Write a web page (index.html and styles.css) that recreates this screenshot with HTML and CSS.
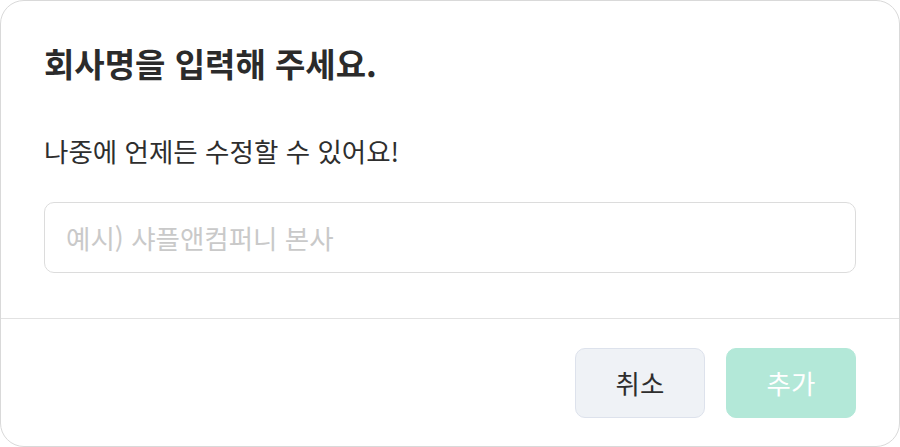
FILE: index.html
```html
<!DOCTYPE html>
<html lang="ko">
<head>
<meta charset="utf-8">
<link rel="stylesheet" href="styles.css">
</head>
<body>
<div class="dialog">
  <div class="dialog-body">
    <h1 class="title">회사명을 입력해 주세요.</h1>
    <p class="subtitle">나중에 언제든 수정할 수 있어요!</p>
    <input class="field" type="text" placeholder="예시) 샤플앤컴퍼니 본사">
  </div>
  <div class="dialog-footer">
    <button class="btn btn-cancel" type="button">취소</button>
    <button class="btn btn-add" type="button">추가</button>
  </div>
</div>
</body>
</html>
```
FILE: styles.css
```css
* { box-sizing: border-box; }
html, body { margin: 0; padding: 0; background: #ffffff; }
body {
  width: 900px;
  height: 447px;
  font-family: "Noto Sans CJK KR", "Noto Sans", sans-serif;
  color: #2e2e2e;
}
.dialog {
  width: 900px;
  height: 447px;
  border: 1px solid #d9d9d9;
  border-radius: 24px;
  background: #fff;
  display: flex;
  flex-direction: column;
  overflow: hidden;
}
.dialog-body {
  padding: 42px 43px 45px 43px;
  display: flex;
  flex-direction: column;
  border-bottom: 1px solid #e2e2e2;
}
.title {
  margin: 0;
  font-size: 33px;
  font-weight: 700;
  line-height: 40px;
  color: #2b2b2b;
}
.subtitle {
  margin: 52px 0 0 0;
  font-size: 26.5px;
  font-weight: 400;
  line-height: 32px;
  color: #2e2e2e;
}
.field {
  margin-top: 35px;
  height: 71px;
  width: 100%;
  border: 1px solid #dcdcdc;
  border-radius: 10px;
  padding: 0 21px;
  font-family: inherit;
  font-size: 26.5px;
  color: #2e2e2e;
  outline: none;
  background: #fff;
}
.field::placeholder { color: #c9c9c9; }
.dialog-footer {
  flex: 1;
  display: flex;
  justify-content: flex-end;
  align-items: center;
  gap: 21px;
  padding: 0 43px 0 43px;
}
.btn {
  width: 130px;
  height: 70px;
  border-radius: 10px;
  font-family: inherit;
  font-size: 26.5px;
  cursor: pointer;
}
.btn-cancel {
  background: #eff2f6;
  border: 1px solid #dde2ec;
  color: #2e2e2e;
}
.btn-add {
  background: #b3e8d8;
  border: 1px solid #b3e8d8;
  color: #ffffff;
}
```
